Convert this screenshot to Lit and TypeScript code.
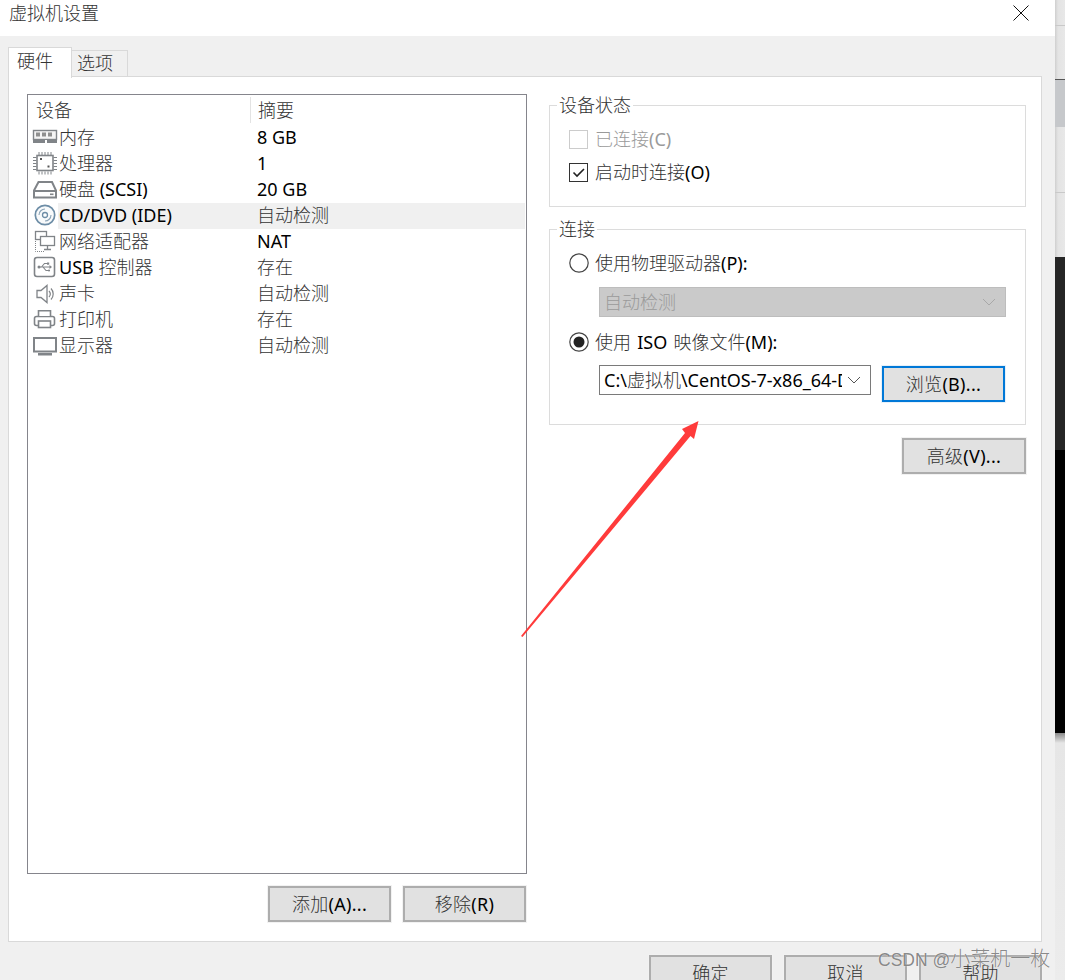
import { LitElement, html, css, svg } from "lit";
import { customElement } from "lit/decorators.js";

const zh = (t: string) =>
  t.split(/([\u3400-\u9fff]+)/).map((p, i) => (i % 2 ? html`<span class="zh">${p}</span>` : p));

const G = "#808488";
const icons: Record<string, unknown> = {
  mem: svg`<rect x="1.500" y="5.500" width="23" height="9" fill="#f4f4f4" stroke="${G}" stroke-width="1.400"/><rect x="4" y="7.500" width="4" height="4" fill="#8f8f8f"/><rect x="10" y="7.500" width="4" height="4" fill="#8f8f8f"/><rect x="16" y="7.500" width="4" height="4" fill="#8f8f8f"/><path d="M1 16.500h24" stroke="${G}" stroke-width="3"/><rect x="13" y="15" width="2" height="3" fill="#fff"/>`,
  cpu: svg`<rect x="5" y="4.500" width="16" height="15" fill="#fff" stroke="${G}" stroke-width="1.600"/><path d="M7 1v3M10 1v3M13 1v3M16 1v3M19 1v3M7 20.500v3M10 20.500v3M13 20.500v3M16 20.500v3M19 20.500v3M1 6.500h3.500M1 9.500h3.500M1 12.500h3.500M1 15.500h3.500M1 18.500h3.500M21.500 6.500h3.500M21.500 9.500h3.500M21.500 12.500h3.500M21.500 15.500h3.500M21.500 18.500h3.500" stroke="${G}"/><rect x="8" y="7" width="2" height="2" fill="#555"/><rect x="15.500" y="14.500" width="2" height="2" fill="#555"/>`,
  hdd: svg`<path d="M2 13.500 6.500 5h13.500l4 8.500v7h-22z" fill="#fff" stroke="${G}" stroke-width="2"/><path d="M2.500 14h21" stroke="${G}" stroke-width="2"/><rect x="18" y="16.500" width="3.500" height="1.600" fill="${G}"/>`,
  cd: svg`<circle cx="13" cy="12" r="9.700" fill="#f8fafb" stroke="#6d8da6" stroke-width="1.700"/><circle cx="13" cy="12" r="2.500" fill="#fff" stroke="#6d8da6" stroke-width="1.300"/><path d="M7 12a6 6 0 0 1 6-6M19 12a6 6 0 0 1-6 6" fill="none" stroke="#8ba3b6" stroke-width="1.100"/>`,
  net: svg`<rect x="3.500" y="2.500" width="11" height="8" fill="#fff" stroke="${G}" stroke-width="1.300"/><rect x="8.500" y="7.500" width="14" height="9" fill="#fff" stroke="${G}" stroke-width="1.300"/><path d="M15.500 17v3.500M12 20.500h7" stroke="${G}" stroke-width="1.300"/><path d="M3.500 12v10.500h9" fill="none" stroke="${G}" stroke-dasharray="1 1"/>`,
  usb: svg`<rect x="2.500" y="2.500" width="20" height="19" rx="2.500" fill="#fff" stroke="${G}" stroke-width="1.600"/><path d="M7 12h11M9.500 12l3-3.500h3M11 12l3 3.500h2.500" fill="none" stroke="${G}" stroke-width="1.100"/><circle cx="7" cy="12" r="1.500" fill="${G}"/><rect x="15" y="7.500" width="2.200" height="2.200" fill="${G}"/><path d="m17.500 10 2.500 2-2.500 2z" fill="${G}"/><circle cx="17" cy="15.500" r="1.100" fill="${G}"/>`,
  snd: svg`<path d="M5 9.500h4l6-5v17l-6-5h-4z" fill="#fff" stroke="${G}" stroke-width="1.300"/><path d="M17 10a4.500 4.500 0 0 1 0 6M19 7.500a8 8 0 0 1 0 11" fill="none" stroke="${G}" stroke-width="1.200"/>`,
  prn: svg`<rect x="2.500" y="9.500" width="20" height="9" rx="2" fill="#fff" stroke="${G}" stroke-width="1.600"/><path d="M6.500 9V3.800h12V9" fill="#fff" stroke="${G}" stroke-width="1.600"/><rect x="6.500" y="14" width="12" height="6.500" fill="#fff" stroke="${G}" stroke-width="1.600"/>`,
  mon: svg`<rect x="2" y="5" width="22" height="13.500" fill="#fff" stroke="${G}" stroke-width="2"/><rect x="6" y="20" width="14" height="2.500" fill="${G}"/>`,
};

const rows: [string, string, string, boolean?][] = [
  ["mem", "内存", "8 GB"],
  ["cpu", "处理器", "1"],
  ["hdd", "硬盘 (SCSI)", "20 GB"],
  ["cd", "CD/DVD (IDE)", "自动检测", true],
  ["net", "网络适配器", "NAT"],
  ["usb", "USB 控制器", "存在"],
  ["snd", "声卡", "自动检测"],
  ["prn", "打印机", "存在"],
  ["mon", "显示器", "自动检测"],
];

@customElement("app-root")
export class AppRoot extends LitElement {
  static styles = css`
    :host {
      display: flex;
      position: relative;
      width: 1065px;
      height: 980px;
      overflow: hidden;
      background: #fff;
      font-family: "Noto Sans", "Noto Sans CJK SC", sans-serif;
      font-size: 18px;
      color: #000;
    }
    .zh { font-family: "Noto Sans CJK SC", sans-serif; font-size: 18px; font-weight: 300; color: #333; line-height: 0; }
    .dialog { width: 1055px; flex: none; display: flex; flex-direction: column; background: #f0f0f0; }
    .title {
      height: 36px; flex: none; background: #fff; display: flex; justify-content: space-between;
      padding: 0 26px 0 9px; box-sizing: border-box; line-height: 26px;
    }
    .title svg { margin-top: 5px; }
    .body { padding: 11px 13px 0 8px; display: flex; flex-direction: column; flex: 1; }
    .tabs { display: flex; height: 30px; align-items: flex-end; margin-bottom: -1px; position: relative; }
    .tab { box-sizing: border-box; border: 1px solid #d9d9d9; }
    .tab.on { width: 64px; height: 31px; background: #fff; border-bottom: 0; padding-left: 8px; position: relative; z-index: 1; margin-bottom: -1px; line-height: 26px; }
    .tab.off { width: 56px; height: 27px; background: #f0f0f0; padding-left: 5px; border-left: 0; line-height: 24px; }
    .panel {
      background: #fff; border: 1px solid #d9d9d9; height: 866px; box-sizing: border-box; flex: none;
      padding: 17px 15px 18px 18px; display: flex; gap: 22px;
    }
    .left { width: 500px; flex: none; display: flex; flex-direction: column; gap: 12px; }
    .list { height: 780px; box-sizing: border-box; border: 1px solid #85858c; flex: none; }
    .head { display: grid; grid-template-columns: 222px 1fr; height: 28px; line-height: 30px; margin-bottom: 2px; }
    .head div { padding-left: 8px; }
    .head div + div { padding-left: 7px; border-left: 1px solid #e3e3e3; height: 26px; margin-top: 2px; line-height: 26px; }
    .row { display: grid; grid-template-columns: 222px 1fr; height: 26px; line-height: 24px; align-items: center; }
    .name { display: flex; align-items: center; padding-left: 4px; height: 26px; white-space: pre; }
    .name svg { width: 26px; height: 26px; flex: none; }
    .name .t { padding-left: 1px; flex: 1; height: 26px; }
    .sel .t, .sel .val { background: #f0f0f0; }
    .val { height: 26px; padding-left: 7px; margin-right: 1px; }
    .btns { display: flex; justify-content: flex-end; gap: 12px; padding-right: 1px; }
    button {
      font: inherit; color: inherit; width: 123px; height: 36px; box-sizing: border-box; padding: 0;
      background: #e1e1e1; border: 2px solid #adadad; box-shadow: 0 0 0 1px #f2f2f2; border-radius: 0; letter-spacing: .3px;
    }
    .right { width: 477px; flex: none; display: flex; flex-direction: column; }
    fieldset { margin: 0; border: 1px solid #dcdcdc; padding: 0 0 0 19px; box-sizing: border-box; min-width: 0; }
    legend { padding: 0 2px; margin-left: -12px; line-height: 22px; height: 23px; }
    .g1 { height: 113px; padding-top: 10px; }
    .g2 { height: 207px; margin-top: 11px; padding-top: 10px; }
    .opt { display: flex; align-items: center; gap: 6px; height: 24px; line-height: 24px; word-spacing: 1.500px; }
    .g1 .opt + .opt { margin-top: 9px; }
    .box { width: 19px; height: 19px; box-sizing: border-box; border: 1px solid #333; flex: none; display: flex; margin-right: 1px; }
    .box.dis { border-color: #ccc; }
    .dim, .dim .zh { color: #9a9a9a; }
    .radio { width: 20px; height: 20px; flex: none; }
    .disabled-select {
      margin: 12px 0 0 30px; width: 407px; height: 30px; box-sizing: border-box; background: #cacaca;
      border: 1px solid #bdbdbd; display: flex; align-items: center; justify-content: space-between;
      padding: 0 9px 0 4px; line-height: 28px;
    }
    .g2 .second { margin-top: 13px; }
    .combo-row { display: flex; margin: 11px 0 0 30px; align-items: flex-start; gap: 11px; }
    .combo {
      width: 272px; height: 30px; box-sizing: border-box; border: 1px solid #7a7a7a; background: #fff;
      display: flex; align-items: center; padding: 0 9px 0 4px; line-height: 28px; justify-content: space-between;
    }
    .combo .txt { width: 238px; overflow: hidden; white-space: pre; }
    .browse { margin-top: 1px; border-color: #0078d7; box-shadow: 0 0 0 1px #e8f1f9; }
    .adv { align-self: flex-end; margin-top: 13px; width: 124px; }
    .bottom { display: flex; justify-content: flex-end; gap: 12px; margin-top: 13px; }
    .strip { width: 10px; flex: none; display: flex; flex-direction: column; }
    .strip div { box-sizing: border-box; }
    .lt { background: linear-gradient(90deg, #cfcfcf, #e4e4e4 30%, #e8e8e8); }
    .s1 { height: 25px; }
    .s2 { height: 54px; border-top: 1px solid #c9c9c9; }
    .s3 { height: 48px; background: #c6c8cb; border-top: 1px solid #555; }
    .s4 { height: 65px; }
    .s4b { height: 65px; border-top: 1px solid #c9c9c9; }
    .s5 { height: 193px; background: #262626; }
    .s6 { height: 283px; background: #000; }
    .s7 { flex: 1; background: linear-gradient(#8a8a8a, #e6e6e6 10px, #ececec); }
    .arrow { position: absolute; left: 0; top: 0; pointer-events: none; }
    .mark {
      position: absolute; left: 878px; top: 944px; font-size: 17.500px; line-height: 28px; color: rgba(70,70,70,.65);
      font-family: "Liberation Sans", sans-serif; white-space: pre; text-shadow: 0 0 1px #fff;
    }
    .mark span { font-family: "Noto Sans CJK SC", sans-serif; font-size: 20px; font-weight: 300; }
  `;

  render() {
    const chev = (c: string) => html`<svg width="14" height="8" viewBox="0 0 14 8"><path d="M1 1l6 6 6-6" fill="none" stroke="${c}" stroke-width="1"/></svg>`;
    return html`
      <div class="dialog">
        <div class="title">
          <span>${zh("虚拟机设置")}</span>
          <svg width="16" height="16" viewBox="0 0 16 16"><path d="M.5.500l15 15M15.500.500l-15 15" stroke="#111" fill="none"/></svg>
        </div>
        <div class="body">
          <div class="tabs">
            <div class="tab on">${zh("硬件")}</div>
            <div class="tab off">${zh("选项")}</div>
          </div>
          <div class="panel">
            <div class="left">
              <div class="list">
                <div class="head"><div>${zh("设备")}</div><div>${zh("摘要")}</div></div>
                ${rows.map(([ic, n, v, s]) => html`
                  <div class="row ${s ? "sel" : ""}">
                    <div class="name"><svg viewBox="0 0 26 26">${icons[ic]}</svg><div class="t">${zh(n)}</div></div>
                    <div class="val">${zh(v)}</div>
                  </div>`)}
              </div>
              <div class="btns"><button>${zh("添加")}(A)...</button><button>${zh("移除")}(R)</button></div>
            </div>
            <div class="right">
              <fieldset class="g1">
                <legend>${zh("设备状态")}</legend>
                <div class="opt dim"><span class="box dis"></span><span>${zh("已连接")}(C)</span></div>
                <div class="opt">
                  <span class="box"><svg width="17" height="17" viewBox="0 0 17 17"><path d="M3.500 8.500l3.500 3.500 7-7" fill="none" stroke="#222" stroke-width="1.600"/></svg></span>
                  <span>${zh("启动时连接")}(O)</span>
                </div>
              </fieldset>
              <fieldset class="g2">
                <legend>${zh("连接")}</legend>
                <div class="opt">
                  <svg class="radio" viewBox="0 0 20 20"><circle cx="10" cy="10" r="9.200" fill="#fff" stroke="#444" stroke-width="1.200"/></svg>
                  <span>${zh("使用物理驱动器")}(P):</span>
                </div>
                <div class="disabled-select"><span class="dim">${zh("自动检测")}</span>${chev("#a8a8a8")}</div>
                <div class="opt second">
                  <svg class="radio" viewBox="0 0 20 20"><circle cx="10" cy="10" r="9.200" fill="#fff" stroke="#444" stroke-width="1.200"/><circle cx="10" cy="10" r="5.500" fill="#222"/></svg>
                  <span>${zh("使用")} ISO ${zh("映像文件")}(M):</span>
                </div>
                <div class="combo-row">
                  <div class="combo"><span class="txt">C:\\${zh("虚拟机")}\\CentOS-7-x86_64-DVD-2009.iso</span>${chev("#555")}</div>
                  <button class="browse">${zh("浏览")}(B)...</button>
                </div>
              </fieldset>
              <button class="adv">${zh("高级")}(V)...</button>
            </div>
          </div>
          <div class="bottom">
            <button>${zh("确定")}</button><button>${zh("取消")}</button><button>${zh("帮助")}</button>
          </div>
        </div>
      </div>
      <div class="strip">
        <div class="s1 lt"></div><div class="s2 lt"></div><div class="s3"></div><div class="s4 lt"></div><div class="s4b lt"></div>
        <div class="s5"></div><div class="s6"></div><div class="s7"></div>
      </div>
      <svg class="arrow" width="1065" height="980" viewBox="0 0 1065 980">
        <path d="M521 636 L685 433 L682 429 L698.500 421 L694 439 L690.500 436 L522.500 637 Z" fill="#ff3b3b"/>
      </svg>
      <div class="mark">CSDN @<span>小菜机一枚</span></div>
    `;
  }
}
